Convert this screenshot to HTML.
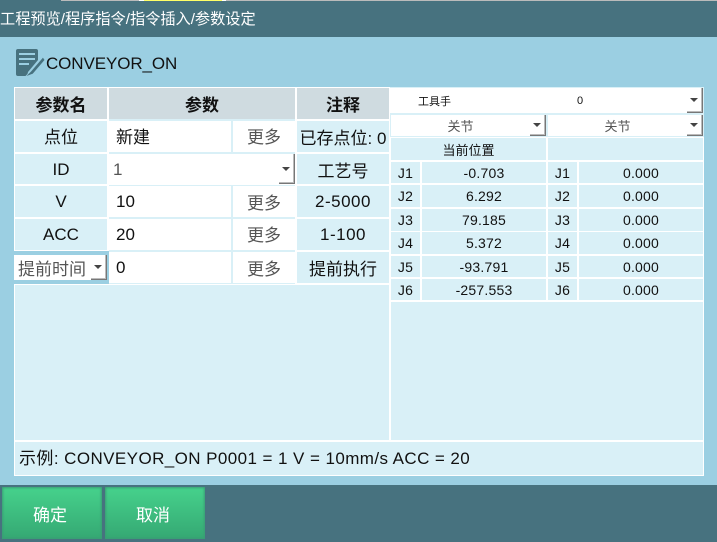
<!DOCTYPE html>
<html><head><meta charset="utf-8"><style>
html,body{margin:0;padding:0}
body{width:717px;height:542px;position:relative;overflow:hidden;background:#9bcfe2;font-family:"Liberation Sans","Noto Sans CJK SC",sans-serif;color:#111}
div{position:absolute;box-sizing:border-box}
.c{display:flex;align-items:center;justify-content:center;white-space:nowrap;font-size:17px;background:#d9f0f7}
.h{background:#cfdbe0;font-weight:bold}
.w{background:#fff}
.m{color:#555}
.l{justify-content:flex-start;padding-left:7px}
.t{font-size:14px;letter-spacing:.2px}
.a{width:16px;background:#fff;border-right:1px solid #777;border-bottom:1px solid #777;box-shadow:inset -1px -1px 0 #bbb}
.a:after{content:"";position:absolute;left:3px;top:50%;margin-top:-2px;border:4px solid transparent;border-top:4px solid #444;border-bottom:0}
.u{padding-bottom:2px}
</style></head><body>
<div style="left:0;top:0;width:717px;height:1px;background:linear-gradient(90deg,#47727f 61px,#bbb 61px,#bbb 139px,#fff 139px,#fff 144px,#ff6 144px,#ff6 222px,#fff 222px,#fff 226px,#bbb 226px)"></div>
<div style="left:0;top:2px;width:717px;height:35px;background:#47727f;color:#fff;font-size:15.2px;line-height:36px;white-space:nowrap">工程预览/程序指令/指令插入/参数设定</div>
<div style="left:0;top:1px;width:717px;height:1px;background:#47727f"></div>
<svg style="position:absolute;left:14px;top:47px" width="32" height="32" viewBox="0 0 32 32"><path d="M4 2h18a2 2 0 0 1 2 2v9l-10 12-1 4H4a2 2 0 0 1-2-2V4a2 2 0 0 1 2-2z" fill="#47727f"/><path d="M5 7h16M5 12h16M5 17h10" stroke="#9bcfe2" stroke-width="2"/><path d="M29 10L17 24l-6 6 8-3L31 13z" fill="#47727f" stroke="#9bcfe2" stroke-width=".8"/></svg>
<div style="left:46px;top:52px;font-size:17px;line-height:24px;white-space:nowrap;letter-spacing:-.1px">CONVEYOR_ON</div>

<div style="left:14px;top:87px;width:690px;height:389px;background:#fff"></div>
<div style="left:15px;top:285px;width:374px;height:155px;background:#d9f0f7"></div>
<div style="left:391px;top:302px;width:312px;height:138px;background:#d9f0f7"></div>
<div style="left:15px;top:442px;width:688px;height:33px;background:#d9f0f7"></div>
<div style="left:107px;top:88px;width:2px;height:196px;background:#fff"></div>

<div class="c h" style="left:15px;top:88px;width:92px;height:31px">参数名</div>
<div class="c h" style="left:109px;top:88px;width:186px;height:31px">参数</div>
<div class="c h" style="left:297px;top:88px;width:92px;height:31px">注释</div>

<div style="left:109px;top:119px;width:186px;height:165px;background:#d9f0f7"></div>
<div class="c u" style="left:15px;top:121px;width:92px;height:31px">点位</div>
<div class="c w l u" style="left:109px;top:121px;width:122px;height:31px">新建</div>
<div class="c w m u" style="left:233px;top:121px;width:62px;height:31px">更多</div>
<div class="c" style="left:297px;top:121px;width:92px;height:31px">已存点位: 0</div>

<div class="c" style="left:15px;top:154px;width:92px;height:30px;padding-top:2px">ID</div>
<div class="c w l m" style="left:109px;top:154px;width:186px;height:31px;padding-left:4px;padding-top:1px">1</div>
<div class="a" style="left:279px;top:154px;height:30px"></div>
<div class="c" style="left:297px;top:154px;width:92px;height:30px">工艺号</div>

<div class="c" style="left:15px;top:186px;width:92px;height:31px">V</div>
<div class="c w l" style="left:109px;top:186px;width:122px;height:31px">10</div>
<div class="c w m" style="left:233px;top:186px;width:62px;height:31px">更多</div>
<div class="c" style="left:297px;top:186px;width:92px;height:31px;letter-spacing:.5px">2-5000</div>

<div class="c" style="left:15px;top:219px;width:92px;height:31px;padding-top:1px">ACC</div>
<div class="c w l" style="left:109px;top:219px;width:122px;height:31px">20</div>
<div class="c w m u" style="left:233px;top:219px;width:62px;height:31px">更多</div>
<div class="c" style="left:297px;top:219px;width:92px;height:31px;letter-spacing:.5px">1-100</div>

<div style="left:14px;top:251px;width:95px;height:33px;background:#9bcfe2"></div>
<div class="c w m l" style="left:14px;top:255px;width:93px;height:25px;padding-left:4px">提前时间</div>
<div class="a" style="left:91px;top:255px;height:25px"></div>
<div class="c w l" style="left:109px;top:252px;width:122px;height:31px">0</div>
<div class="c w m" style="left:233px;top:252px;width:62px;height:31px">更多</div>
<div class="c" style="left:297px;top:252px;width:92px;height:31px">提前执行</div>

<div style="left:390px;top:87px;width:314px;height:50px;background:#d9f0f7"></div>
<div class="c w" style="left:390px;top:88px;width:313px;height:25px;font-size:11px"><span style="position:absolute;left:28px">工具手</span><span style="position:absolute;left:187px">0</span></div>
<div class="a" style="left:687px;top:88px;height:25px"></div>
<div class="c w m" style="left:391px;top:115px;width:155px;height:21px;font-size:13px;padding-right:16px">关节</div>
<div class="a" style="left:530px;top:115px;height:21px"></div>
<div class="c w m" style="left:548px;top:115px;width:155px;height:21px;font-size:13px;padding-right:16px">关节</div>
<div class="a" style="left:687px;top:115px;height:21px"></div>
<div class="c" style="left:391px;top:138px;width:155px;height:22px;font-size:13px">当前位置</div>
<div class="c" style="left:548px;top:138px;width:155px;height:22px"></div>

<div class="c t" style="left:391px;top:162px;width:29px;height:21px">J1</div><div class="c t" style="left:422px;top:162px;width:124px;height:21px">-0.703</div><div class="c t" style="left:548px;top:162px;width:29px;height:21px">J1</div><div class="c t" style="left:579px;top:162px;width:124px;height:21px">0.000</div>
<div class="c t" style="left:391px;top:185px;width:29px;height:22px">J2</div><div class="c t" style="left:422px;top:185px;width:124px;height:22px">6.292</div><div class="c t" style="left:548px;top:185px;width:29px;height:22px">J2</div><div class="c t" style="left:579px;top:185px;width:124px;height:22px">0.000</div>
<div class="c t" style="left:391px;top:209px;width:29px;height:22px">J3</div><div class="c t" style="left:422px;top:209px;width:124px;height:22px">79.185</div><div class="c t" style="left:548px;top:209px;width:29px;height:22px">J3</div><div class="c t" style="left:579px;top:209px;width:124px;height:22px">0.000</div>
<div class="c t" style="left:391px;top:232px;width:29px;height:22px">J4</div><div class="c t" style="left:422px;top:232px;width:124px;height:22px">5.372</div><div class="c t" style="left:548px;top:232px;width:29px;height:22px">J4</div><div class="c t" style="left:579px;top:232px;width:124px;height:22px">0.000</div>
<div class="c t" style="left:391px;top:256px;width:29px;height:21px">J5</div><div class="c t" style="left:422px;top:256px;width:124px;height:21px">-93.791</div><div class="c t" style="left:548px;top:256px;width:29px;height:21px">J5</div><div class="c t" style="left:579px;top:256px;width:124px;height:21px">0.000</div>
<div class="c t" style="left:391px;top:279px;width:29px;height:21px">J6</div><div class="c t" style="left:422px;top:279px;width:124px;height:21px">-257.553</div><div class="c t" style="left:548px;top:279px;width:29px;height:21px">J6</div><div class="c t" style="left:579px;top:279px;width:124px;height:21px">0.000</div>

<div style="left:19px;top:447px;font-size:17px;line-height:24px;white-space:nowrap;letter-spacing:.42px">示例: CONVEYOR_ON P0001 = 1 V = 10mm/s ACC = 20</div>

<div style="left:0;top:485px;width:717px;height:57px;background:#47727f"></div>
<div class="c" style="left:2px;top:487px;width:100px;height:52px;background:linear-gradient(#46d28c,#35a873);box-shadow:inset 0 0 2px 1px #3a9c75;color:#fff;font-size:17px;padding-right:4px">确定</div>
<div class="c" style="left:105px;top:487px;width:100px;height:52px;background:linear-gradient(#46d28c,#35a873);box-shadow:inset 0 0 2px 1px #3a9c75;color:#fff;font-size:17px;padding-right:4px">取消</div>
</body></html>
